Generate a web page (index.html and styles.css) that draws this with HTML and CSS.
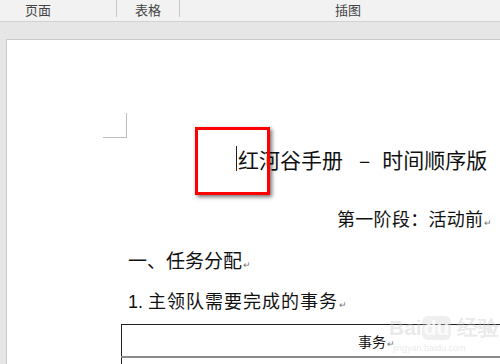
FILE: index.html
```
<!DOCTYPE html>
<html>
	<head>
		<meta charset="UTF-8">
		<title>红河谷手册</title>
		<link rel="stylesheet" href="styles.css">
	</head>
	<body>
		<div class="ribbon">
			<div class="group g1">页面</div>
			<div class="group g2">表格</div>
			<div class="group g3">插图</div>
		</div>
		<div class="workspace">
			<div class="page">
				<div class="corner"></div>
				<div class="mark"></div>
				<div class="title"><span class="cursor"></span>红河谷手册<span class="dash">–</span>时间顺序版</div>
				<div class="stage">第一阶段：活动前<span class="ret">↵</span></div>
				<div class="head">一、任务分配<span class="ret">↵</span></div>
				<div class="item"><span class="num">1.</span> 主领队需要完成的事务<span class="ret">↵</span></div>
				<table class="tasks">
					<tr><td>事务<span class="ret">↵</span></td></tr>
					<tr><td class="empty"></td></tr>
				</table>
				<div class="wm">
					<div class="wm-logo">Bai<span class="paw">du</span> 经验</div>
					<div class="wm-url">jingyan.baidu.com</div>
				</div>
			</div>
		</div>
	</body>
</html>
```
FILE: styles.css
```
* {margin:0; padding:0; border:0; box-sizing:border-box;}
html, body {
	height:100%;
	overflow:hidden;
}
body {
	background:#e6e6e6;
	font-family:"Noto Sans CJK SC", "Liberation Sans", sans-serif;
	color:#111;
}
.ribbon {
	display:flex;
	height:22px;
	background:#f2f2f2;
	border-bottom:1px solid #d2d2d2;
	font-size:13px;
	line-height:20px;
	color:#444;
}
.group {
	height:17px;
	line-height:20px;
}
.g1 {
	width:117px;
	padding-left:25px;
	border-right:1px solid #c8c8c8;
}
.g2 {
	width:63px;
	text-align:center;
	border-right:1px solid #c8c8c8;
}
.g3 {
	padding-left:155px;
}
.workspace {
	padding:17px 0 0 6px;
	height:calc(100% - 22px);
	overflow:hidden;
}
.page {
	position:relative;
	background:#fff;
	border-left:1px solid #c9c9c9;
	border-top:1px solid #c9c9c9;
	height:100%;
	padding:106px 0 0 114px;
	white-space:nowrap;
	overflow:hidden;
}
.corner {
	position:absolute;
	left:96px;
	top:73px;
	width:24px;
	height:25px;
	border-right:1px solid #bdbdbd;
	border-bottom:1px solid #bdbdbd;
}
.mark {
	position:absolute;
	left:188px;
	top:87px;
	width:75px;
	height:68px;
	border:3px solid #f00;
	box-shadow:2px 2px 4px rgba(0,0,0,0.55);
	z-index:2;
}
.title {
	font-size:21px;
	line-height:26px;
	height:26px;
	padding-left:115px;
	color:#111;
}
.cursor {
	display:inline-block;
	width:1px;
	height:25px;
	margin-right:1px;
	background:#222;
	vertical-align:top;
}
.dash {
	margin:0 12px 0 16px;
}
.stage, .head, .item {
	height:24px;
	line-height:24px;
}
.stage {
	margin-top:34px;
	padding-left:216px;
	font-size:18px;
	letter-spacing:0.3px;
}
.head {
	margin-top:18px;
	padding-left:7px;
	font-size:19px;
}
.item {
	margin-top:16px;
	padding-left:7px;
	font-size:18px;
	letter-spacing:1px;
}
.num {
	font-family:"Liberation Sans", sans-serif;
	letter-spacing:0;
	line-height:1;
}
.ret {
	font-size:9px;
	line-height:1;
	color:#777;
	letter-spacing:0;
	margin-left:1px;
}
.tasks {
	margin-top:12px;
	width:390px;
	border-collapse:collapse;
	border-top:1px solid #222;
	border-left:1px solid #222;
}
.tasks td {
	height:32px;
	font-size:14px;
	line-height:20px;
	text-align:left;
	padding:2px 0 0 236px;
	border-bottom:2px solid #8a8a8a;
}
.tasks .empty {
	border-bottom:0;
	height:20px;
}
.wm {
	position:absolute;
	left:382px;
	top:276px;
	color:rgba(200,200,200,0.4);
	font-family:"Liberation Sans", sans-serif;
	font-weight:bold;
	pointer-events:none;
}
.wm-logo {
	font-size:21px;
	line-height:24px;
}
.paw {
	display:inline-block;
	background:rgba(210,210,210,0.35);
	color:rgba(255,255,255,0.8);
	border-radius:6px;
	padding:0 2px;
}
.wm-url {
	font-size:9px;
	line-height:12px;
	padding:2px 0 0 4px;
	font-weight:normal;
}
```
